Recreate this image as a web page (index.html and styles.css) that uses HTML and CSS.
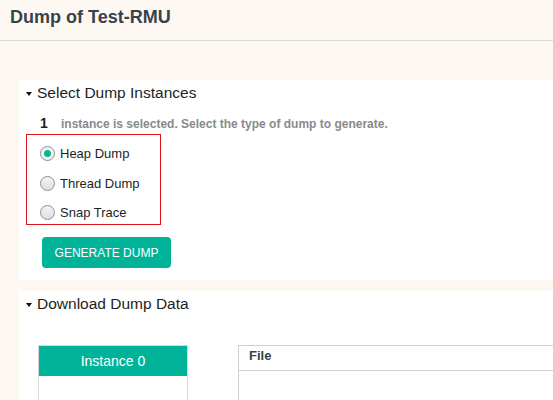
FILE: index.html
```html
<!DOCTYPE html>
<html>
<head>
<meta charset="utf-8">
<link rel="stylesheet" href="styles.css">
</head>
<body>
<header class="page-header"><h1 class="page-title">Dump of Test-RMU</h1></header>
<main class="content">
  <section class="card card-select">
    <h2 class="card-title"><span class="caret"></span>Select Dump Instances</h2>
    <p class="info"><span class="count">1</span><span class="info-text">instance is selected. Select the type of dump to generate.</span></p>
    <div class="radio-box">
      <label class="radio-row"><span class="radio checked"></span>Heap Dump</label>
      <label class="radio-row"><span class="radio"></span>Thread Dump</label>
      <label class="radio-row"><span class="radio"></span>Snap Trace</label>
    </div>
    <button class="btn-generate">GENERATE DUMP</button>
  </section>
  <section class="card card-download">
    <h2 class="card-title"><span class="caret"></span>Download Dump Data</h2>
    <div class="tables">
      <div class="instance-table">
        <div class="instance-head">Instance 0</div>
        <div class="instance-body"></div>
      </div>
      <div class="file-table">
        <div class="file-head">File</div>
        <div class="file-body"></div>
      </div>
    </div>
  </section>
</main>
</body>
</html>
```

FILE: styles.css
```css
* { box-sizing: border-box; }
html, body { margin: 0; padding: 0; }
body {
  background: #fef8f2;
  font-family: "Liberation Sans", Arial, sans-serif;
  color: #222;
  width: 553px;
  height: 400px;
  overflow: hidden;
}
.page-header {
  height: 41px;
  border-bottom: 1px solid #dcdcdc;
  padding: 5px 10px 0;
}
.page-title {
  margin: 0;
  font-size: 18px;
  line-height: 24px;
  font-weight: bold;
  color: #38424c;
}
.content {
  padding: 39px 0 0 19px;
  display: flex;
  flex-direction: column;
  gap: 11px;
}
.card {
  background: #fff;
  padding: 3px 0 0 7px;
}
.card-select { height: 200px; }
.card-download { height: 120px; }
.card-title {
  margin: 0;
  font-size: 15.5px;
  line-height: 20px;
  font-weight: normal;
  color: #1e1e1e;
  display: flex;
  align-items: center;
}
.caret {
  width: 0; height: 0;
  border-left: 3.5px solid transparent;
  border-right: 3.5px solid transparent;
  border-top: 4px solid #111;
  margin: 1px 5px 0 0;
}
.info {
  margin: 12px 0 0 14px;
  display: flex;
  align-items: baseline;
  line-height: 16px;
}
.count {
  font-weight: bold;
  font-size: 14px;
  color: #222;
  width: 21px;
}
.info-text {
  font-weight: bold;
  font-size: 12px;
  color: #8a8a8a;
}
.radio-box {
  margin-top: 2px;
  width: 135px;
  height: 91px;
  border: 1px solid #e0141e;
  padding: 4px 0 0 13px;
}
.radio-row {
  display: flex;
  align-items: center;
  height: 29.5px;
  font-size: 13px;
  color: #1e1e1e;
}
.radio {
  width: 15px; height: 15px;
  border-radius: 50%;
  border: 1px solid #8f8f8f;
  background: linear-gradient(#f4f4f4, #dedede);
  margin-right: 5px;
  display: flex;
  align-items: center;
  justify-content: center;
}
.radio.checked { background: #f2f2f2; }
.radio.checked::after {
  content: "";
  width: 7px; height: 7px;
  border-radius: 50%;
  background: #0db493;
}
.btn-generate {
  display: block;
  margin: 12px 0 0 16px;
  width: 129px;
  height: 31px;
  border: none;
  border-radius: 4px;
  background: #00b398;
  color: #fff;
  font-family: "Liberation Sans", Arial, sans-serif;
  font-size: 12px;
  padding: 0;
}
.tables {
  display: flex;
  margin: 31px 0 0 12px;
  gap: 50px;
}
.instance-table {
  width: 150px;
  border: 1px solid #d9d9d9;
  border-bottom: none;
  height: 60px;
}
.instance-head {
  height: 30px;
  background: #00b398;
  color: #fff;
  font-size: 14px;
  display: flex;
  align-items: center;
  justify-content: center;
}
.file-table {
  flex: 1;
  border: 1px solid #cfcfcf;
  border-right: none;
  border-bottom: none;
  height: 60px;
}
.file-head {
  height: 25px;
  border-bottom: 1px solid #cfcfcf;
  padding: 2px 0 0 10px;
  font-size: 13px;
  font-weight: bold;
  color: #38424c;
}
```
